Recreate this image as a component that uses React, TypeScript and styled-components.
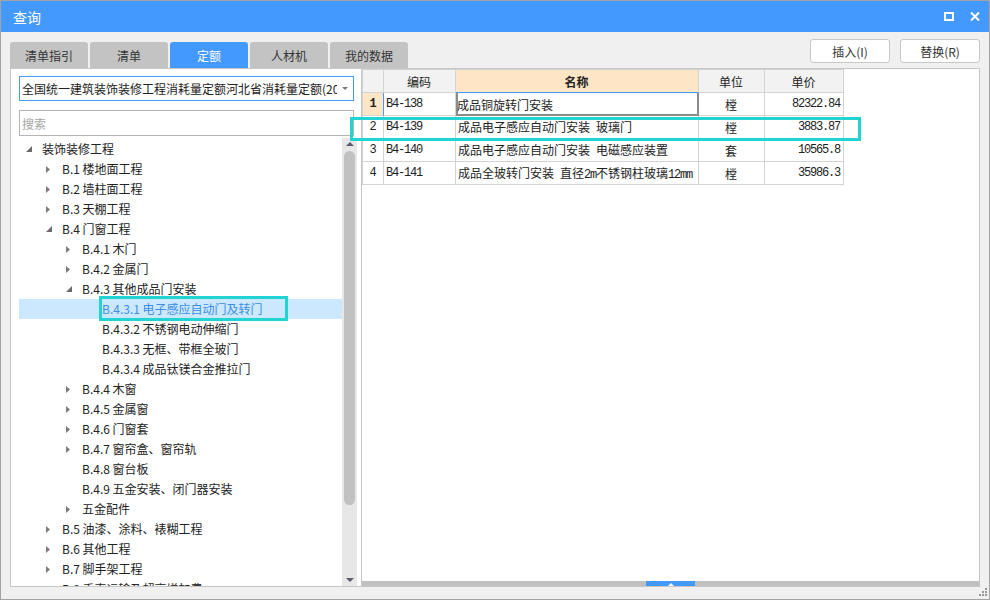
import React from 'react';
import styled, { createGlobalStyle } from 'styled-components';

const GlobalStyle = createGlobalStyle`
  html, body {
    margin: 0;
    padding: 0;
    background: #fff;
  }
  body {
    font-family: "Noto Sans CJK SC", "Noto Sans", sans-serif;
    font-size: 12px;
    color: #222;
  }
  * {
    box-sizing: border-box;
  }
`;

type TreeNode = {
    level: number,
    label: string,
    toggle?: 'open' | 'closed',
    selected?: boolean
}

const tree: TreeNode[] = [
    {level: 0, label: '装饰装修工程', toggle: 'open'},
    {level: 1, label: 'B.1 楼地面工程', toggle: 'closed'},
    {level: 1, label: 'B.2 墙柱面工程', toggle: 'closed'},
    {level: 1, label: 'B.3 天棚工程', toggle: 'closed'},
    {level: 1, label: 'B.4 门窗工程', toggle: 'open'},
    {level: 2, label: 'B.4.1 木门', toggle: 'closed'},
    {level: 2, label: 'B.4.2 金属门', toggle: 'closed'},
    {level: 2, label: 'B.4.3 其他成品门安装', toggle: 'open'},
    {level: 3, label: 'B.4.3.1 电子感应自动门及转门', selected: true},
    {level: 3, label: 'B.4.3.2 不锈钢电动伸缩门'},
    {level: 3, label: 'B.4.3.3 无框、带框全玻门'},
    {level: 3, label: 'B.4.3.4 成品钛镁合金推拉门'},
    {level: 2, label: 'B.4.4 木窗', toggle: 'closed'},
    {level: 2, label: 'B.4.5 金属窗', toggle: 'closed'},
    {level: 2, label: 'B.4.6 门窗套', toggle: 'closed'},
    {level: 2, label: 'B.4.7 窗帘盒、窗帘轨', toggle: 'closed'},
    {level: 2, label: 'B.4.8 窗台板'},
    {level: 2, label: 'B.4.9 五金安装、闭门器安装'},
    {level: 2, label: '五金配件', toggle: 'closed'},
    {level: 1, label: 'B.5 油漆、涂料、裱糊工程', toggle: 'closed'},
    {level: 1, label: 'B.6 其他工程', toggle: 'closed'},
    {level: 1, label: 'B.7 脚手架工程', toggle: 'closed'},
    {level: 1, label: 'B.8 垂直运输及超高增加费', toggle: 'closed'},
];

type QuotaRow = {
    code: string,
    name: string,
    unit: string,
    price: string
}

const rows: QuotaRow[] = [
    {code: 'B4-138', name: '成品铜旋转门安装', unit: '樘', price: '82322.84'},
    {code: 'B4-139', name: '成品电子感应自动门安装 玻璃门', unit: '樘', price: '3883.87'},
    {code: 'B4-140', name: '成品电子感应自动门安装 电磁感应装置', unit: '套', price: '10565.8'},
    {code: 'B4-141', name: '成品全玻转门安装 直径2m不锈钢柱玻璃12mm', unit: '樘', price: '35986.3'},
];

const tabs = ['清单指引', '清单', '定额', '人材机', '我的数据'];

// latin runs get the narrow mono face, the rest stays CJK
const splitRuns = (s: string) => s.match(/[\x20-\x7e]+|[^\x20-\x7e]+/g) || [];

export default function App() {
    return (
        <>
            <GlobalStyle/>
            <Window>
                <TitleBar>
                    <Title>查询</Title>
                    <TitleIcons>
                        <svg width="10" height="9" viewBox="0 0 10 9">
                            <rect x="1" y="1" width="8" height="7" fill="none" stroke="#fff" strokeWidth="2"/>
                        </svg>
                        <svg width="10" height="9" viewBox="0 0 10 9">
                            <path d="M1 0.5L9 8.5M9 0.5L1 8.5" stroke="#fff" strokeWidth="2"/>
                        </svg>
                    </TitleIcons>
                </TitleBar>

                <Body>
                    <Toolbar>
                        <Tabs>
                            {tabs.map(t => (
                                <Tab key={t} $active={t === '定额'}>{t}</Tab>
                            ))}
                        </Tabs>
                        <Buttons>
                            <Button>插入(I)</Button>
                            <Button>替换(R)</Button>
                        </Buttons>
                    </Toolbar>

                    <Main>
                        <LeftPanel>
                            <Combo>
                                <ComboText>全国统一建筑装饰装修工程消耗量定额河北省消耗量定额(2012)</ComboText>
                                <ComboArrow>
                                    <svg width="6" height="3" viewBox="0 0 6 3">
                                        <polygon points="0,0 6,0 3,3" fill="#777"/>
                                    </svg>
                                </ComboArrow>
                            </Combo>
                            <Search>搜索</Search>
                            <TreeBox>
                                <TreeList>
                                    {tree.map(n => (
                                        <TreeRow key={n.label} $level={n.level} $selected={n.selected}>
                                            <Toggle>
                                                {n.toggle === 'open' && (
                                                    <svg width="6" height="6" viewBox="0 0 6 6">
                                                        <polygon points="6,0 6,6 0,6" fill="#6a6a6a"/>
                                                    </svg>
                                                )}
                                                {n.toggle === 'closed' && (
                                                    <svg width="4" height="7" viewBox="0 0 4 7">
                                                        <polygon points="0,0 4,3.5 0,7" fill="#7c7c7c"/>
                                                    </svg>
                                                )}
                                            </Toggle>
                                            <TreeLabel>
                                                {n.label}
                                                {n.selected && <TreeMark/>}
                                            </TreeLabel>
                                        </TreeRow>
                                    ))}
                                </TreeList>
                                <VScroll>
                                    <svg width="8" height="4" viewBox="0 0 8 4">
                                        <polygon points="0,4 4,0 8,4" fill="#5c5c68"/>
                                    </svg>
                                    <VThumb/>
                                    <svg width="8" height="4" viewBox="0 0 8 4">
                                        <polygon points="0,0 8,0 4,4" fill="#5c5c68"/>
                                    </svg>
                                </VScroll>
                            </TreeBox>
                        </LeftPanel>

                        <RightPanel>
                            <Grid>
                                <Cell $bg="#f2f2f2"/>
                                <Cell $bg="#f2f2f2" $align="center">编码</Cell>
                                <Cell $bg="#fde5c6" $align="center" $bold $blueBottom>名称</Cell>
                                <Cell $bg="#f2f2f2" $align="center">单位</Cell>
                                <Cell $bg="#f2f2f2" $align="center">单价</Cell>

                                {rows.map((r, i) => (
                                    <React.Fragment key={r.code}>
                                        <Cell $align="center" $mono $bold={i === 0}
                                              $bg={i === 0 ? '#fde5c6' : '#fff'} $blueRight={i === 0}>
                                            {i + 1}
                                        </Cell>
                                        <Cell $mono>{r.code}</Cell>
                                        <Cell $focus={i === 0}>
                                            <CellText>
                                                {splitRuns(r.name).map((part, k) =>
                                                    /^[\x20-\x7e]+$/.test(part)
                                                        ? <Latin key={k}>{part}</Latin>
                                                        : <span key={k}>{part}</span>
                                                )}
                                            </CellText>
                                        </Cell>
                                        <Cell $align="center">{r.unit}</Cell>
                                        <Cell $align="flex-end" $mono>{r.price}</Cell>
                                    </React.Fragment>
                                ))}

                                <RowMark/>
                            </Grid>

                            <HScroll>
                                <HThumb>
                                    <svg width="6" height="3" viewBox="0 0 6 3">
                                        <polygon points="0,3 3,0 6,3" fill="#fff"/>
                                    </svg>
                                </HThumb>
                            </HScroll>
                        </RightPanel>
                    </Main>
                </Body>

                <Grip>
                    <svg width="9" height="9" viewBox="0 0 9 9">
                        <rect x="6" y="0" width="2" height="2" fill="#999"/>
                        <rect x="3" y="3" width="2" height="2" fill="#999"/>
                        <rect x="6" y="3" width="2" height="2" fill="#999"/>
                        <rect x="0" y="6" width="2" height="2" fill="#999"/>
                        <rect x="3" y="6" width="2" height="2" fill="#999"/>
                        <rect x="6" y="6" width="2" height="2" fill="#999"/>
                    </svg>
                </Grip>
            </Window>
        </>
    );
}

const Window = styled.div`
  position: relative;
  width: 990px;
  height: 600px;
  border: 1px solid #a3a3a3;
  background: #f0f0f0;
  display: flex;
  flex-direction: column;
  overflow: hidden;
`

const TitleBar = styled.div`
  height: 31px;
  flex: none;
  background: #4499ff;
  color: #fff;
  display: flex;
  align-items: center;
  padding: 0 9px 0 12px;
`

const Title = styled.div`
  flex: 1;
  font-size: 14px;
`

const TitleIcons = styled.div`
  display: flex;
  align-items: center;
  gap: 16px;
`

const Body = styled.div`
  flex: 1;
  min-height: 0;
  display: flex;
  flex-direction: column;
  padding: 0 9px 12px 9px;
`

const Toolbar = styled.div`
  height: 36px;
  flex: none;
  display: flex;
  justify-content: space-between;
`

const Tabs = styled.div`
  align-self: flex-end;
  display: flex;
  gap: 2px;
`

const Tab = styled.div<{ $active?: boolean }>`
  width: 78px;
  height: 26px;
  border-radius: 3px 3px 0 0;
  background: ${p => p.$active ? '#4499ff' : '#c3c3c3'};
  color: ${p => p.$active ? '#fff' : '#333'};
  display: flex;
  align-items: center;
  justify-content: center;
`

const Buttons = styled.div`
  display: flex;
  gap: 10px;
  margin-top: 7px;
  align-self: flex-start;
`

const Button = styled.div`
  width: 80px;
  height: 24px;
  background: #fff;
  border: 1px solid #c8c8c8;
  border-radius: 3px;
  color: #333;
  display: flex;
  align-items: center;
  justify-content: center;
`

const Main = styled.div`
  flex: 1;
  min-height: 0;
  display: flex;
`

const LeftPanel = styled.div`
  width: 351px;
  flex: none;
  background: #fff;
  border: 1px solid #c6c6c6;
  border-right: none;
  padding: 7px 4px 0 8px;
  display: flex;
  flex-direction: column;
`

const Combo = styled.div`
  width: 335px;
  height: 25px;
  flex: none;
  border: 1px solid #4499ff;
  display: flex;
  align-items: center;
  padding-left: 2px;
`

const ComboText = styled.div`
  flex: 1;
  overflow: hidden;
  white-space: nowrap;
  color: #222;
`

const ComboArrow = styled.div`
  width: 16px;
  flex: none;
  display: flex;
  justify-content: center;
`

const Search = styled.div`
  width: 335px;
  height: 26px;
  flex: none;
  margin-top: 9px;
  border: 1px solid #b4b4b4;
  color: #a6a6a6;
  display: flex;
  align-items: center;
  padding-left: 2px;
`

const TreeBox = styled.div`
  flex: 1;
  min-height: 0;
  margin-top: 2px;
  display: flex;
`

const TreeList = styled.div`
  flex: 1;
  overflow: hidden;
  padding-top: 1px;
`

const TreeRow = styled.div<{ $level: number, $selected?: boolean }>`
  height: 20px;
  display: flex;
  align-items: center;
  white-space: nowrap;
  padding-left: ${p => 7 + p.$level * 20}px;
  background: ${p => p.$selected ? '#cce8ff' : 'transparent'};
  color: ${p => p.$selected ? '#3a8ee6' : '#222'};
`

const Toggle = styled.span`
  width: 16px;
  flex: none;
  display: flex;
  align-items: center;
`

const TreeLabel = styled.span`
  position: relative;
  line-height: 20px;
`

const TreeMark = styled.span`
  position: absolute;
  left: -3px;
  top: -3px;
  width: 189px;
  height: 25px;
  border: 3px solid #22d3d3;
`

const VScroll = styled.div`
  width: 15px;
  flex: none;
  background: #e7e7e7;
  display: flex;
  flex-direction: column;
  align-items: center;
  padding: 4px 0;
`

const VThumb = styled.div`
  width: 11px;
  height: 354px;
  margin-top: 5px;
  margin-bottom: auto;
  border-radius: 6px;
  background: #c1c1c1;
`

const RightPanel = styled.div`
  flex: 1;
  position: relative;
  background: #fff;
  border: 1px solid #c6c6c6;
  display: flex;
  flex-direction: column;
`

const Grid = styled.div`
  position: relative;
  align-self: flex-start;
  display: grid;
  grid-template-columns: 21px 72px 243px 66px 79px;
  border-left: 1px solid #d3d3d3;
  border-top: 1px solid #d3d3d3;
`

type CellProps = {
    $align?: string,
    $bg?: string,
    $bold?: boolean,
    $mono?: boolean,
    $focus?: boolean,
    $blueBottom?: boolean,
    $blueRight?: boolean
}

const Cell = styled.div<CellProps>`
  height: 23px;
  display: flex;
  align-items: center;
  justify-content: ${p => p.$align || 'flex-start'};
  padding: ${p => p.$focus ? '0 3px 0 1px' : '0 3px 0 2px'};
  white-space: pre;
  overflow: hidden;
  background: ${p => p.$bg || '#fff'};
  font-weight: ${p => p.$bold ? 700 : 400};
  color: #222;
  border-right: 1px solid ${p => p.$blueRight ? '#4499ff' : p.$focus ? '#8c8c8c' : '#d3d3d3'};
  border-bottom: 1px solid ${p => p.$blueBottom ? '#4499ff' : p.$focus ? '#8c8c8c' : '#d3d3d3'};
  font-family: ${p => p.$mono
          ? '"Liberation Mono", monospace'
          : '"Noto Sans CJK SC", sans-serif'};
  letter-spacing: ${p => p.$mono ? '-1.2px' : '0'};
  box-shadow: ${p => p.$focus ? 'inset 2px 0 0 #8c8c8c, inset -1px -1px 0 #8c8c8c' : 'none'};
`

const CellText = styled.span`
  white-space: pre;
`

const Latin = styled.span`
  font-family: "Liberation Mono", monospace;
  letter-spacing: -1.2px;
`

const RowMark = styled.div`
  position: absolute;
  left: -13px;
  top: 47px;
  width: 511px;
  height: 24px;
  border: 3px solid #22d3d3;
`

const HScroll = styled.div`
  margin-top: auto;
  height: 5px;
  flex: none;
  background: #c0c0c0;
  display: flex;
`

const HThumb = styled.div`
  width: 49px;
  margin-left: 284px;
  background: #4499ff;
  display: flex;
  align-items: flex-end;
  justify-content: center;
`

const Grip = styled.div`
  position: absolute;
  right: 1px;
  bottom: 2px;
  display: flex;
`
